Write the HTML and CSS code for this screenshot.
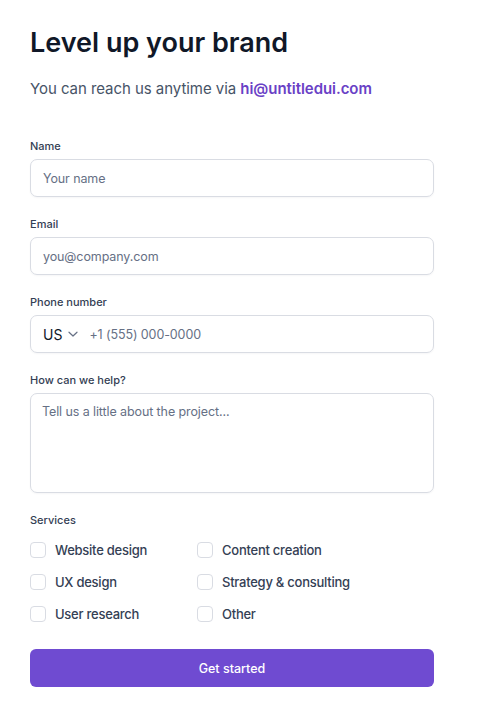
FILE: index.html
```html
<!DOCTYPE html>
<html lang="en">
<head>
<meta charset="utf-8">
<title>Level up your brand</title>
<link rel="stylesheet" href="styles.css">
</head>
<body>
<main class="page">
  <header class="intro">
    <h1 class="title">Level up your brand</h1>
    <p class="subtitle">You can reach us anytime via <a class="mail" href="#">hi@untitledui.com</a></p>
  </header>
  <form class="form">
    <div class="field">
      <label class="label">Name</label>
      <div class="input"><span class="ph">Your name</span></div>
    </div>
    <div class="field">
      <label class="label">Email</label>
      <div class="input"><span class="ph">you@company.com</span></div>
    </div>
    <div class="field">
      <label class="label">Phone number</label>
      <div class="input phone">
        <span class="country">US</span>
        <svg class="chev" width="12" height="12" viewBox="0 0 12 12" fill="none"><path d="M2 4.25L6 8L10 4.25" stroke="#667085" stroke-width="1.2" stroke-linecap="round" stroke-linejoin="round"/></svg>
        <span class="ph">+1 (555) 000-0000</span>
      </div>
    </div>
    <div class="field">
      <label class="label">How can we help?</label>
      <div class="input area"><span class="ph">Tell us a little about the project...</span></div>
    </div>
    <div class="field services">
      <span class="label">Services</span>
      <div class="checks">
        <label class="check"><span class="box"></span>Website design</label>
        <label class="check"><span class="box"></span>Content creation</label>
        <label class="check"><span class="box"></span>UX design</label>
        <label class="check"><span class="box"></span>Strategy &amp; consulting</label>
        <label class="check"><span class="box"></span>User research</label>
        <label class="check"><span class="box"></span>Other</label>
      </div>
    </div>
    <button class="submit" type="button">Get started</button>
  </form>
</main>
</body>
</html>
```
FILE: styles.css
```css
* { box-sizing: border-box; }
html, body { margin: 0; background: #ffffff; }
body {
  font-family: Inter, "Noto Sans", sans-serif;
  color: #101828;
}
.page {
  width: 404px;
  margin-left: 30px;
  padding-top: 25px;
}
.title {
  margin: 0;
  font-size: 27px;
  line-height: 36px;
  font-weight: 600;
  letter-spacing: 0;
  color: #101828;
}
.subtitle {
  margin: 16px 0 0;
  font-size: 15px;
  line-height: 24px;
  letter-spacing: -0.05px;
  color: #475467;
}
.mail {
  color: #6941c6;
  font-weight: 600;
  text-decoration: none;
}
.form {
  margin-top: 37px;
  display: flex;
  flex-direction: column;
  gap: 19px;
}
.field {
  display: flex;
  flex-direction: column;
  gap: 5px;
}
.label {
  font-size: 11px;
  line-height: 16px;
  font-weight: 500;
  color: #344054;
}
.input {
  height: 38px;
  border: 1px solid #d9dce3;
  border-radius: 7px;
  padding: 0 12px;
  display: flex;
  align-items: center;
  font-size: 12.5px;
  letter-spacing: -0.1px;
  box-shadow: 0 1px 2px rgba(16, 24, 40, 0.04);
}
.ph { color: #667085; }
.country { color: #101828; font-size: 14px; letter-spacing: 0; }
.chev { margin: 0 10px 0 5px; }
.area {
  height: 100px;
  align-items: flex-start;
  padding: 9px 11px 0;
  line-height: 18px;
}
.services { gap: 12px; }
.checks {
  display: grid;
  grid-template-columns: 167px 1fr;
  row-gap: 12px;
}
.check {
  display: flex;
  align-items: center;
  gap: 9px;
  height: 20px;
  font-size: 13px;
  letter-spacing: -0.25px;
  font-weight: 500;
  color: #344054;
}
.box {
  width: 16px;
  height: 16px;
  border: 1px solid #d9dce3;
  border-radius: 4px;
  flex: none;
}
.submit {
  margin-top: 6px;
  height: 38px;
  border: none;
  border-radius: 6px;
  background: #6f4bd1;
  color: #ffffff;
  font-family: inherit;
  font-size: 12.5px;
  font-weight: 500;
}
```
